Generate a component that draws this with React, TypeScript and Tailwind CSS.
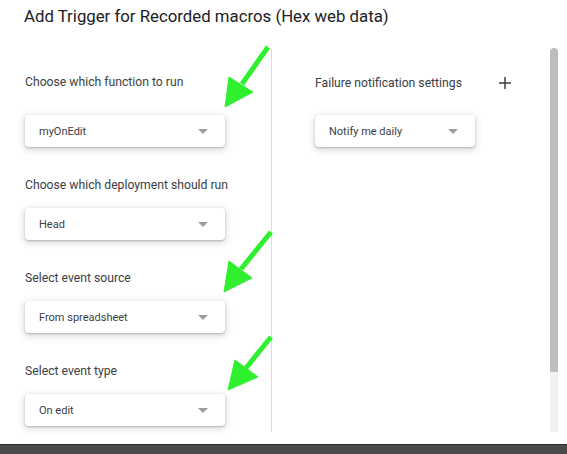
import React from "react";

const font = { fontFamily: "Roboto, 'Liberation Sans', sans-serif" };

function Select({ text, w }: { text: string; w: string }) {
  return (
    <div
      className={`${w} h-8 rounded-[4px] bg-white flex items-center justify-between pl-[14px] pr-[17px] shadow-[0_1px_2px_rgba(60,64,67,0.3),0_2px_6px_2px_rgba(60,64,67,0.15)]`}
    >
      <span className="text-[11px] text-[#3c4043] leading-none">{text}</span>
      <svg width="10" height="5" viewBox="0 0 10 5">
        <polygon points="0,0 10,0 5,5" fill="#9aa0a6" />
      </svg>
    </div>
  );
}

export default function App() {
  return (
    <div
      className="w-[567px] h-[454px] bg-white flex flex-col relative overflow-hidden"
      style={font}
    >
      <div className="h-[48px] pl-6 pt-[6px] text-[16.8px] leading-5 text-[#202124]">
        Add Trigger for Recorded macros (Hex web data)
      </div>
      <div className="flex h-[384px]">
        <div className="w-[272px] border-r border-[#dadce0] pl-[25px] pt-[24px] flex flex-col">
          <div className="h-5 leading-5 text-[12.2px] text-[#3c4043]">Choose which function to run</div>
          <div className="mt-[23px]">
            <Select text="myOnEdit" w="w-[200px]" />
          </div>
          <div className="mt-[28px] h-5 leading-5 text-[12.2px] text-[#3c4043]">Choose which deployment should run</div>
          <div className="mt-[13px]">
            <Select text="Head" w="w-[200px]" />
          </div>
          <div className="mt-[28px] h-5 leading-5 text-[12.2px] text-[#3c4043]">Select event source</div>
          <div className="mt-[13px]">
            <Select text="From spreadsheet" w="w-[200px]" />
          </div>
          <div className="mt-[28px] h-5 leading-5 text-[12.2px] text-[#3c4043]">Select event type</div>
          <div className="mt-[13px]">
            <Select text="On edit" w="w-[200px]" />
          </div>
        </div>
        <div className="flex-1 pl-[43px] pt-[25px] flex flex-col">
          <div className="w-[196px] h-5 flex items-center justify-between">
            <span className="leading-5 text-[12.2px] text-[#3c4043]">Failure notification settings</span>
            <svg width="12" height="12" viewBox="0 0 12 12">
              <path d="M6 0V12M0 6H12" stroke="#3c4043" strokeWidth="1.5" />
            </svg>
          </div>
          <div className="mt-[22px]">
            <Select text="Notify me daily" w="w-[160px]" />
          </div>
        </div>
        <div className="w-2 mr-[9px] flex flex-col">
          <div className="h-[324px] bg-[#bdbdbd] rounded-t-[4px]" />
          <div className="flex-1 bg-[#f1f1f1]" />
        </div>
      </div>
      <div className="flex-1" />
      <div className="h-[10px] bg-[#4a4a4a] border-t border-[#2a2a2a]" />
      <svg className="absolute left-0 top-0 pointer-events-none" width="567" height="454">
        <g fill="#2ff02f" stroke="#2ff02f">
          <line x1="268" y1="47" x2="242" y2="84" strokeWidth="5" />
          <polygon points="229,77 253,92 225,107" strokeWidth="1" />
          <line x1="271" y1="232" x2="241" y2="269" strokeWidth="5" />
          <polygon points="229,261 252,278 224,292" strokeWidth="1" />
          <line x1="271" y1="337" x2="246" y2="368" strokeWidth="5" />
          <polygon points="235,360 258,377 228,390" strokeWidth="1" />
        </g>
      </svg>
    </div>
  );
}
